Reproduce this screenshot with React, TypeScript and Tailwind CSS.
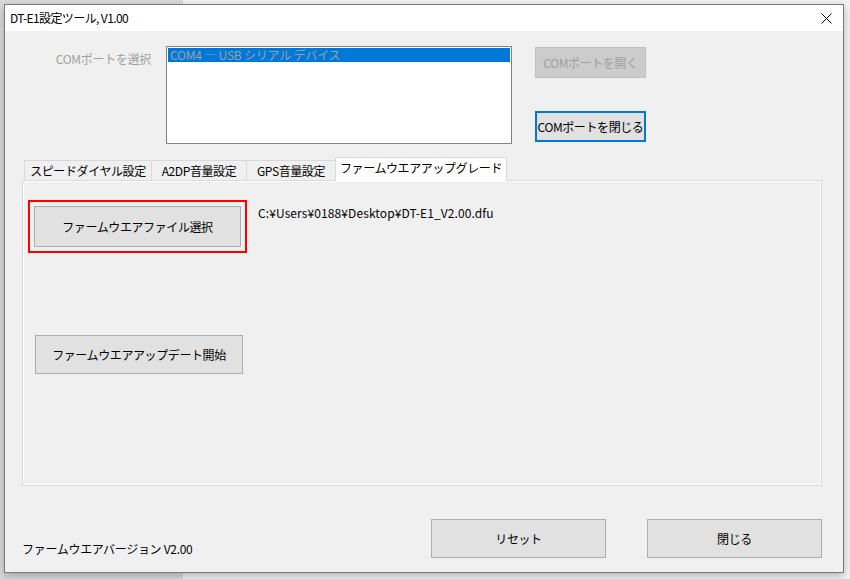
import React from "react";

const font = { fontFamily: '"Noto Sans CJK JP", "Noto Sans", sans-serif' };

function Btn({ children, className = "" }: { children: React.ReactNode; className?: string }) {
  return (
    <div
      className={
        "flex items-center justify-center bg-[#e1e1e1] border border-[#adadad] text-[12px] leading-none text-black tracking-[-0.4px] " +
        className
      }
    >
      {children}
    </div>
  );
}

export default function App() {
  return (
    <div
      className="w-[850px] h-[579px] overflow-hidden bg-[linear-gradient(to_right,#d9d9d9_0,#d9d9d9_183px,#f2f2f2_183px)] pt-[4px] pl-[4px]"
      style={font}
    >
      <div className="w-[840px] h-[569px] border border-[#7a7a7a] bg-[#f0f0f0] shadow-[0_3px_8px_rgba(0,0,0,0.25)] flex flex-col">
        {/* title bar */}
        <div className="h-[26px] bg-white flex items-center justify-between pl-[5px] pr-[10px] shrink-0">
          <span className="text-[12px] leading-none text-black tracking-[-0.6px]">DT-E1設定ツール, V1.00</span>
          <svg width="11" height="11" viewBox="0 0 11 11" className="mr-[1px]">
            <path d="M0.5 0.5 L10.5 10.5 M10.5 0.5 L0.5 10.5" stroke="#000" strokeWidth="1" fill="none" />
          </svg>
        </div>

        {/* content */}
        <div className="flex-1 flex flex-col">
          {/* top row */}
          <div className="flex pt-[15px]">
            <div className="w-[146px] text-right pt-[7px] text-[12px] leading-none text-[#a0a0a0] tracking-[-0.3px]">
              COMポートを選択
            </div>
            <div className="ml-[15px] w-[346px] h-[98px] bg-white border border-[#828282] p-[1px]">
              <div className="h-[14px] bg-[#0078d7] text-[#a0a0a0] text-[12px] leading-[14px] pl-[2px] whitespace-nowrap tracking-[-0.2px]">
                COM4 ― USB シリアル デバイス
              </div>
            </div>
            <div className="ml-[23px] flex flex-col">
              <div className="mt-[1px] w-[111px] h-[31px] flex items-center justify-center bg-[#cccccc] border border-[#bfbfbf] text-[12px] leading-none text-[#a0a0a0] tracking-[-0.4px]">
                COMポートを開く
              </div>
              <div className="mt-[33px] w-[111px] h-[31px] flex items-center justify-center bg-[#e1e1e1] border-2 border-[#0078d7] text-[12px] leading-none text-black tracking-[-0.4px]">
                COMポートを閉じる
              </div>
            </div>
          </div>

          {/* tabs */}
          <div className="mt-[13px] ml-[19px] h-[24px] flex items-end -mb-[1px] relative z-10 text-[12px] leading-none tracking-[-0.4px]">
            <div className="w-[128px] h-[20px] mb-[1px] border border-b-0 border-[#d9d9d9] bg-[#f0f0f0] flex items-center justify-center pt-[1px]">
              スピードダイヤル設定
            </div>
            <div className="w-[95px] h-[20px] mb-[1px] border border-b-0 border-l-0 border-[#d9d9d9] bg-[#f0f0f0] flex items-center justify-center pt-[1px]">
              A2DP音量設定
            </div>
            <div className="w-[89px] h-[20px] mb-[1px] border border-b-0 border-l-0 border-[#d9d9d9] bg-[#f0f0f0] flex items-center justify-center pt-[1px]">
              GPS音量設定
            </div>
            <div className="w-[172px] h-[24px] border border-b-0 border-[#d9d9d9] bg-white flex items-start justify-center pt-[4px] -ml-[1px]">
              ファームウエアアップグレード
            </div>
          </div>

          {/* panel */}
          <div className="ml-[17px] w-[800px] h-[306px] border border-[#d9d9d9]">
            <div className="w-full h-full border border-white flex flex-col pl-[4px] pt-[18px]">
              <div className="flex items-start">
                <div className="border-2 border-[#ff0000] p-[4px]">
                  <Btn className="w-[207px] h-[41px]">ファームウエアファイル選択</Btn>
                </div>
                <div className="ml-[11px] mt-[7px] text-[12px] leading-none text-black tracking-[0.1px]">
                  C:¥Users¥0188¥Desktop¥DT-E1_V2.00.dfu
                </div>
              </div>
              <Btn className="mt-[82px] ml-[7px] w-[208px] h-[39px]">ファームウエアアップデート開始</Btn>
            </div>
          </div>

          {/* bottom */}
          <div className="flex items-end mt-[33px]">
            <div className="pl-[17px] pb-[3px] text-[12px] leading-none text-black tracking-[-0.3px]">
              ファームウエアバージョン V2.00
            </div>
            <div className="ml-auto mr-[21px] flex">
              <Btn className="w-[175px] h-[39px]">リセット</Btn>
              <Btn className="ml-[41px] w-[175px] h-[39px]">閉じる</Btn>
            </div>
          </div>
        </div>
      </div>
    </div>
  );
}
